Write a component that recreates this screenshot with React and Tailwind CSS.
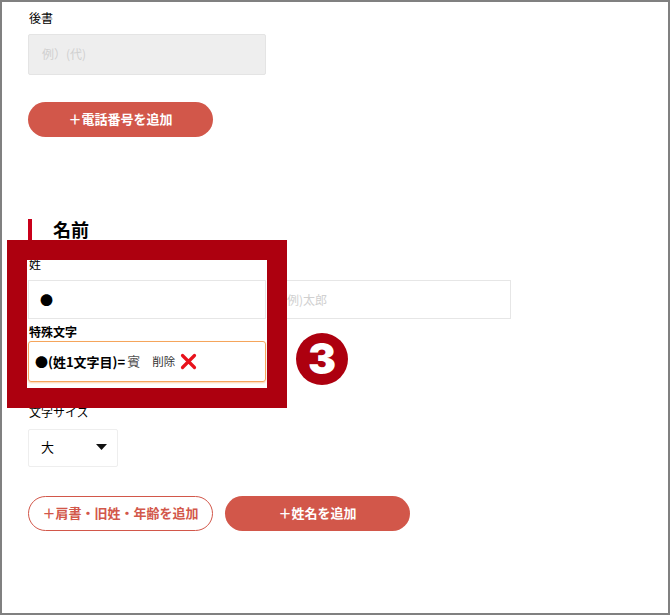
function Label({ children, bold }) {
  return <p className={`text-[12px] leading-[16px] text-black ${bold ? "font-bold" : ""}`}>{children}</p>
}

function PillButton({ children, outline }) {
  return (
    <button
      className={`w-[185px] h-[35px] pb-[2px] rounded-full text-[13px] font-bold flex items-center justify-center ${
        outline ? "bg-white border border-[#d2574a] text-[#d2574a]" : "bg-[#d2574a] text-white"
      }`}
    >
      {children}
    </button>
  )
}

export default function App() {
  return (
    <div className="relative w-[670px] h-[616px] bg-white overflow-hidden font-['Noto_Sans_CJK_JP',sans-serif]">
      <div className="w-[670px] h-[615px] border-2 border-[#808080] pl-[26px] pt-[8px]">
        <div className="pl-[1px]">
          <Label>後書</Label>
        </div>
        <div className="mt-[8px] w-[238px] h-[41px] bg-[#eeeeee] border border-[#e4e4e4] rounded-[2px] pl-[13px] pb-[2px] flex items-center text-[12px] text-[#d0d0d0]">
          例）(代)
        </div>
        <div className="mt-[27px]">
          <PillButton>＋電話番号を追加</PillButton>
        </div>

        <div className="mt-[82px] h-[21px] flex items-center border-l-4 border-[#c9001a] pl-[21px]">
          <h2 className="text-[18px] font-bold text-black">名前</h2>
        </div>

        <div className="mt-[16px] pl-[1px]">
          <Label>姓</Label>
        </div>
        <div className="mt-[8px] flex gap-[11px]">
          <div className="w-[238px] h-[39px] border border-[#e6e6e6] pl-[11px] flex items-center text-[13px] text-black">●</div>
          <div className="w-[234px] h-[39px] border border-[#e6e6e6] pl-[9px] flex items-center text-[12px] text-[#d0d0d0]">例)太郎</div>
        </div>

        <div className="mt-[5px] pl-[1px]">
          <Label bold>特殊文字</Label>
        </div>
        <div className="mt-[1px] w-[238px] h-[41px] border border-[#f5a55c] rounded-[3px] shadow-[0_1px_2px_#fbd2ac] pl-[6px] flex items-center text-[13px] text-black">
          <span className="font-bold">●(姓1文字目)=</span>
          <span className="ml-[2px] text-[13px] text-[#555555] font-['Liberation_Serif','Noto_Sans_CJK_JP',serif]">賓</span>
          <span className="ml-[12px] text-[11.5px] text-[#333333]">削除</span>
          <svg className="ml-[5px]" width="17" height="17" viewBox="0 0 17 17">
            <path d="M2.5 2.5 L14.5 14.5 M14.5 2.5 L2.5 14.5" stroke="#e8121c" strokeWidth="3.2" strokeLinecap="round" fill="none" />
          </svg>
        </div>

        <div className="mt-[22px] pl-[1px]">
          <Label>文字サイズ</Label>
        </div>
        <div className="mt-[9px] w-[90px] h-[38px] border border-[#eeeeee] rounded-[2px] pl-[12px] pr-[10px] pb-[2px] flex items-center justify-between text-[13px] text-black">
          <span>大</span>
          <svg width="11" height="6" viewBox="0 0 11 6">
            <path d="M0 0 H11 L5.5 6 Z" fill="#111111" />
          </svg>
        </div>

        <div className="mt-[29px] flex gap-[12px]">
          <PillButton outline>＋肩書・旧姓・年齢を追加</PillButton>
          <PillButton>＋姓名を追加</PillButton>
        </div>
      </div>

      {/* annotation over the form */}
      <div className="absolute left-[7px] top-[240px] w-[280px] h-[168px] border-[20px] border-[#ad000f]" />
      <div className="absolute left-[296px] top-[333px] w-[52px] h-[52px] rounded-full bg-[#ad000f] flex items-center justify-center text-white text-[42px] leading-none font-black font-['Inter',sans-serif]">
        3
      </div>
    </div>
  )
}
